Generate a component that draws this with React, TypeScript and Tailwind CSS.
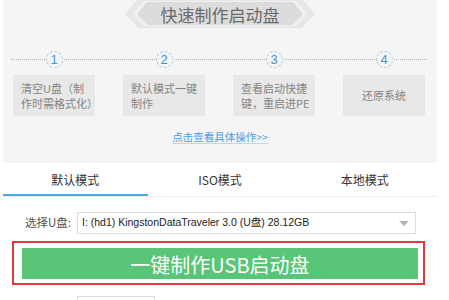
import React from 'react';

const steps = [
  { n: 1, lines: ['清空U盘（制', '作时需格式化）'] },
  { n: 2, lines: ['默认模式一键', '制作'] },
  { n: 3, lines: ['查看启动快捷', '键，重启进PE'] },
  { n: 4, lines: ['还原系统'] },
];

const tabs = ['默认模式', 'ISO模式', '本地模式'];

const Banner: React.FC = () => (
  <div className="grid w-[190px] h-[28px] mx-auto">
    <svg className="[grid-area:1/1]" width="190" height="28" viewBox="0 0 190 28">
      <polygon points="0,14 13,-1 177,-1 190,14 177,28 13,28" fill="#e7e7e7" />
      <polygon points="8,14 19,1 171,1 182,14 171,26 19,26" fill="#f1f1f1" />
      <polygon points="12,14 22,2 168,2 178,14 168,25 22,25" fill="#dcdcdc" />
    </svg>
    <div className="[grid-area:1/1] flex items-center justify-center text-[17px] text-[#6a6a6a] leading-none pt-[1px]">
      快速制作启动盘
    </div>
  </div>
);

export default function App() {
  return (
    <div className="w-[449px] h-[300px] overflow-hidden bg-white font-['Noto_Sans_CJK_SC',sans-serif]">
      <div className="ml-[3px] w-[434px] h-[163px] bg-[#f6f5f5] flex flex-col">
        <Banner />

        <div className="relative mt-[23px] ml-[10px] w-[412px]">
          <div className="absolute left-[-2px] right-[-2px] top-[8px] border-t border-dotted border-[#b5b5b5]" />
          <div className="relative grid grid-cols-4 gap-x-[28px]">
            {steps.map((s) => (
              <div key={s.n} className="flex flex-col items-center">
                <div className="w-[17px] h-[17px] rounded-full border border-dashed border-[#a9cbe8] bg-[#f6f5f5] flex items-center justify-center text-[13px] leading-none text-[#3f94dc] font-['Liberation_Sans',sans-serif]">
                  {s.n}
                </div>
                <div
                  className={
                    'mt-[7px] w-[82px] h-[41px] bg-[#e8e8e8] text-[11px] leading-[15px] text-[#848484] flex flex-col justify-center ' +
                    (s.lines.length === 1 ? 'items-center' : 'pl-[8px]')
                  }
                >
                  {s.lines.map((l) => (
                    <span key={l} className="whitespace-nowrap">{l}</span>
                  ))}
                </div>
              </div>
            ))}
          </div>
        </div>

        <div className="mt-[6px] text-center">
          <span className="text-[10.5px] text-[#4a9fe2] underline decoration-[#b9d8f2] underline-offset-2">
            点击查看具体操作{'>>'}
          </span>
        </div>
      </div>

      <div className="ml-[3px] w-[434px] flex border-b border-[#eeeeee]">
        {tabs.map((t, i) => (
          <div
            key={t}
            className={
              'flex-1 h-[33px] pt-[3px] flex items-center justify-center text-[12px] text-[#333333] border-b-2 ' +
              (i === 0 ? 'border-[#4aa8e3]' : 'border-transparent')
            }
          >
            {t}
          </div>
        ))}
      </div>

      <div className="mt-[15px] flex items-center pl-[25px]">
        <span className="w-[52px] text-[11.5px] text-[#555555]">选择U盘:</span>
        <div className="w-[339px] h-[22px] border border-[#dddddd] flex items-center justify-between pl-[4px] pr-[6px]">
          <span className="text-[10.5px] text-[#222222] font-['Liberation_Sans','Noto_Sans_CJK_SC',sans-serif] whitespace-nowrap">
            I: (hd1) KingstonDataTraveler 3.0 (U盘) 28.12GB
          </span>
          <span className="w-0 h-0 border-l-[5px] border-r-[5px] border-t-[5px] border-l-transparent border-r-transparent border-t-[#b5b5b5]" />
        </div>
      </div>

      <div className="mt-[7px] ml-[12px] w-[413px] h-[44px] border-2 border-[#e33b3d] pl-[8px] pr-[5px] pt-[5px] pb-[4px]">
        <button className="w-full h-full bg-[#58c676] text-white text-[20px] leading-none flex items-center justify-center pt-[2px]">
          一键制作USB启动盘
        </button>
      </div>

      <div className="mt-[11px] flex items-start pl-[25px]">
        <span className="w-[52px] pt-[6px] text-[11.5px] text-[#999999]">写入模式:</span>
        <div className="w-[78px] h-[22px] border border-[#dddddd] text-[11px] text-[#777777] pl-[4px] pt-[5px]">HDD-FAT32</div>
        <span className="ml-[10px] pt-[6px] text-[11px] text-[#aaaaaa]">分区格式</span>
      </div>
    </div>
  );
}
